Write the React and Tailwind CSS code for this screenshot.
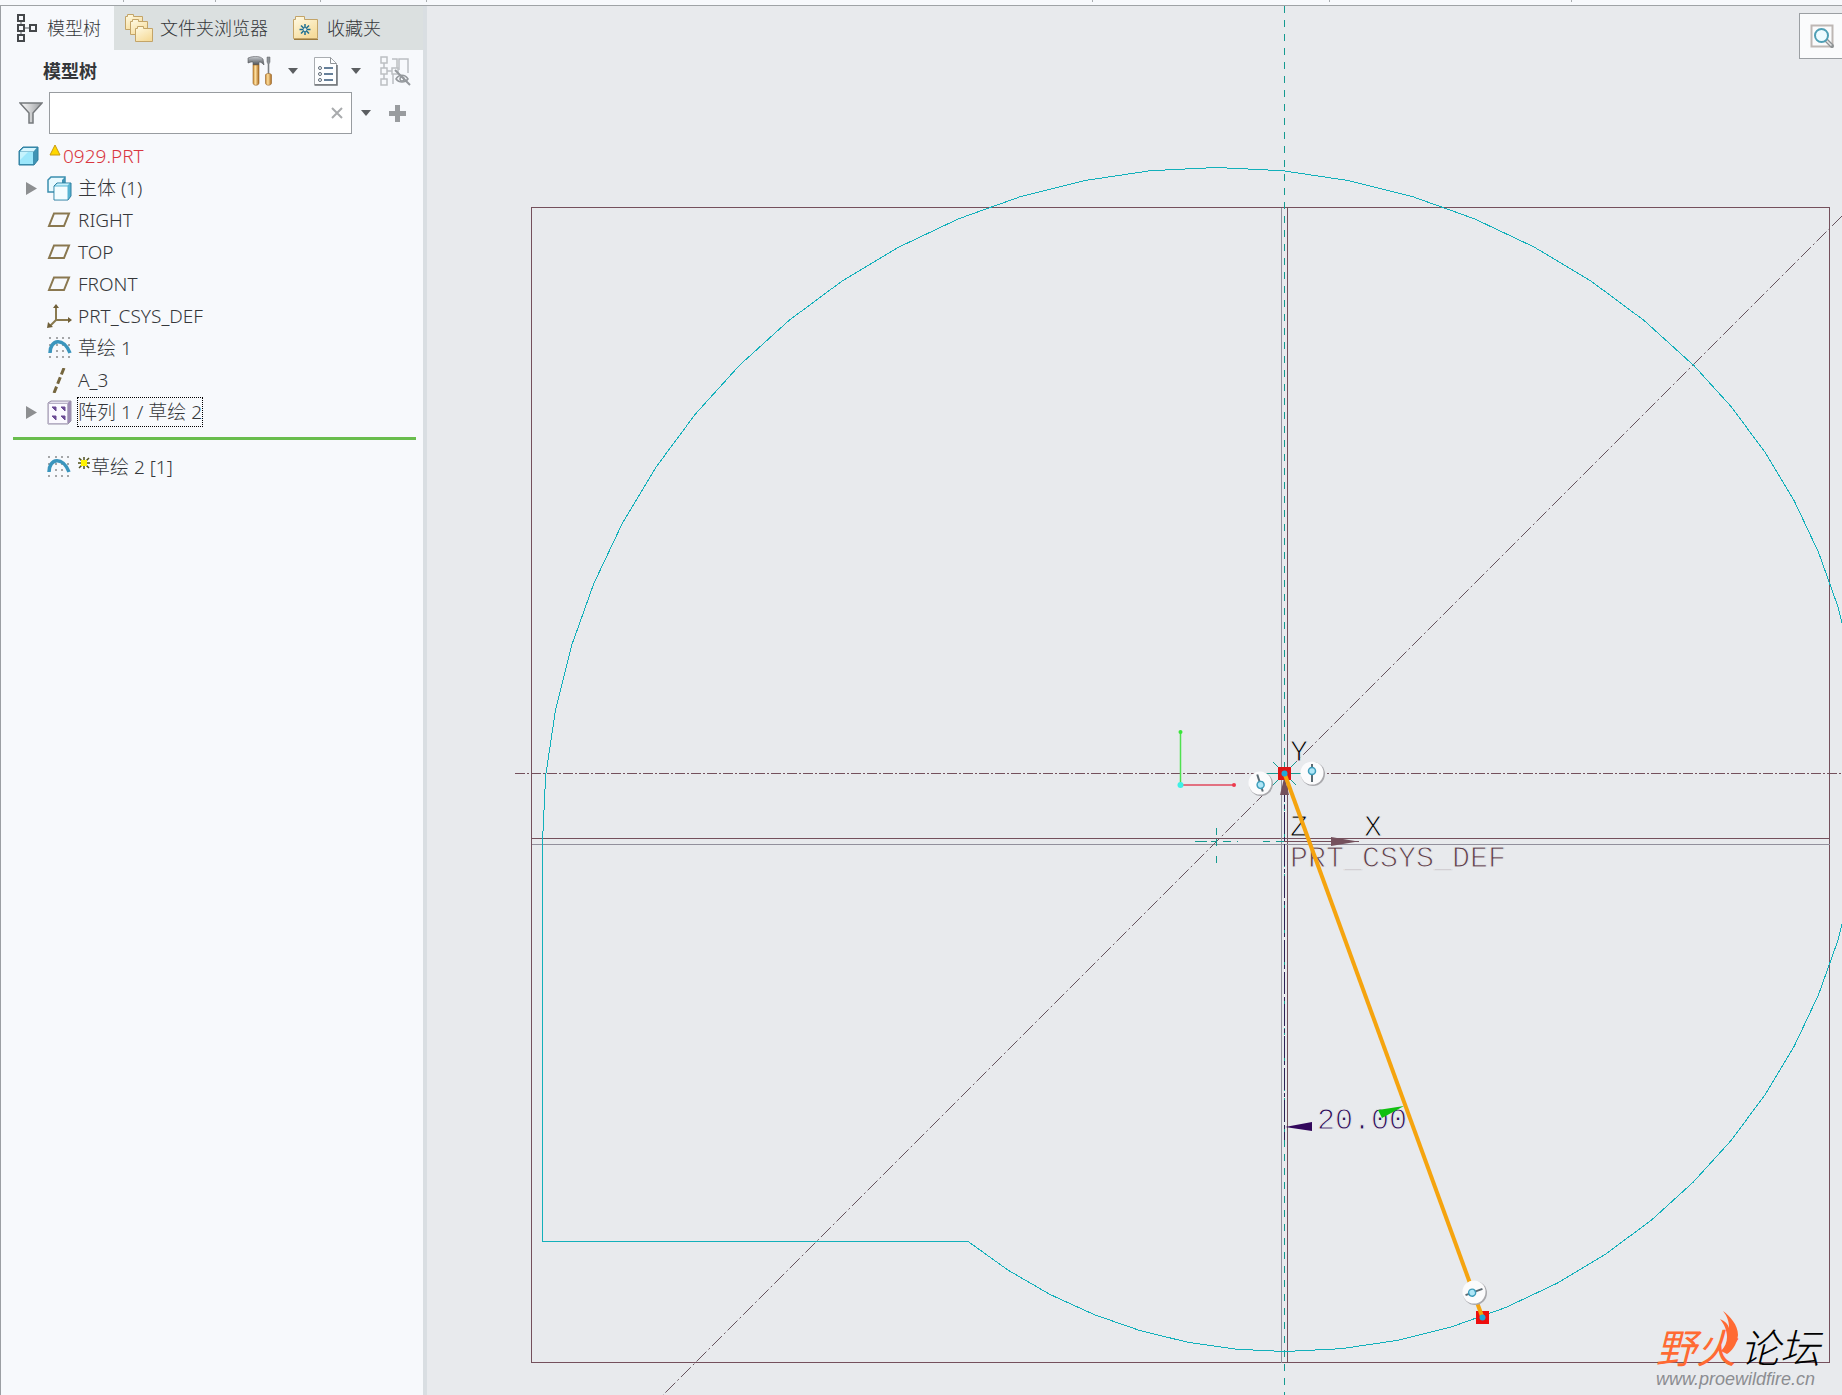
// src/App.jsx
import { useState } from 'react';

/* ---------- toolbar icons ---------- */

const TreeTabIcon = () => (
  <svg width="22" height="30" viewBox="0 0 22 30" fill="none" stroke="#45484b" strokeWidth="2">
    <path d="M4 8v4M4 18v5M8 15h4" stroke="#8b8f92" strokeWidth="1.5" />
    <rect x="1" y="2" width="6" height="6" />
    <rect x="1" y="12" width="6" height="6" />
    <rect x="1" y="22" width="6" height="6" />
    <rect x="13" y="12" width="6" height="6" />
  </svg>
);

const FoldersIcon = () => (
  <svg width="30" height="30" viewBox="0 0 30 30">
    <defs>
      <linearGradient id="folder" x1="0" y1="0" x2="0.6" y2="1">
        <stop offset="0" stopColor="#fffbe6" />
        <stop offset="1" stopColor="#f6dc9c" />
      </linearGradient>
    </defs>
    <g fill="url(#folder)" stroke="#c3a468">
      <path d="M1.5 3.5h2v-2h6v2h9v13h-17z" />
      <path d="M6.5 8.5h2v-2h6v2h9v13h-17z" />
      <path d="M11.5 15.5h2v-2h6v2h9v13h-17z" />
    </g>
  </svg>
);

const FavoriteIcon = () => (
  <svg width="27" height="26" viewBox="0 0 27 26">
    <path d="M1.5 4.5h2v-3h9v3h13v19h-24z" fill="url(#folder)" stroke="#c3a468" />
    <path d="M2 24.5h24" stroke="#9c7a3c" />
    <g stroke="#1d6f93" strokeWidth="1.5">
      <path d="M13 9v11M7.5 14.5h11M9 10.5l8 8M17 10.5l-8 8" />
    </g>
    <circle cx="13" cy="14.5" r="1.5" fill="#f3f3e6" />
  </svg>
);

const ToolsIcon = () => (
  <svg width="26" height="31" viewBox="0 0 26 31">
    <defs>
      <linearGradient id="wood" x1="0" x2="1">
        <stop offset="0" stopColor="#c98a32" />
        <stop offset="0.4" stopColor="#ffe0a0" />
        <stop offset="1" stopColor="#a9681b" />
      </linearGradient>
      <linearGradient id="steel" x1="0" y1="0" x2="0" y2="1">
        <stop offset="0" stopColor="#c9cdd1" />
        <stop offset="1" stopColor="#4d5156" />
      </linearGradient>
    </defs>
    <path d="M1 2l3 -1c4 -1 9 -1 12 2l1 6c-2-2-3-3-5-3v3H6V6H4L1 7z" fill="url(#steel)" stroke="#55585c" strokeWidth="0.6" />
    <path d="M6 9h6v18c0 3-6 3-6 0z" fill="url(#wood)" stroke="#97652a" strokeWidth="0.6" />
    <path d="M20 1h3v5l-1 2v10h-1V8l-1-2z" fill="#8d9297" stroke="#606468" strokeWidth="0.5" />
    <path d="M18.5 19c0-2 6-2 6 0v8c0 3-6 3-6 0z" fill="url(#wood)" stroke="#97652a" strokeWidth="0.6" />
  </svg>
);

const ListDocIcon = () => (
  <svg width="26" height="31" viewBox="0 0 26 31" fill="none">
    <path d="M1.5 1.5h16l6 6v21h-22z" fill="#fdfeff" stroke="#a9adb1" />
    <path d="M17.5 1.5v6h6" stroke="#8f9397" />
    <path d="M1.5 29h22.5V9" stroke="#6e7276" strokeWidth="1.5" />
    <g stroke="#5d6a76">
      <circle cx="7" cy="12" r="1.5" />
      <circle cx="7" cy="18" r="1.5" />
      <circle cx="7" cy="24" r="1.5" />
    </g>
    <path d="M11 12h9M11 18h9M11 24h9" stroke="#66809a" strokeWidth="2" />
  </svg>
);

const TreeHiddenIcon = () => (
  <svg width="31" height="31" viewBox="0 0 31 31" fill="none" stroke="#bcbfc2" strokeWidth="1.5">
    <rect x="1" y="1" width="6" height="6" />
    <rect x="1" y="12" width="6" height="6" />
    <rect x="1" y="23" width="6" height="6" />
    <rect x="12" y="12" width="6" height="6" />
    <path d="M4 7v5M4 18v5M7 15h5M12 3h5v9M19 14V3h9v14M13 18v10" />
    <path d="M16 23c3-5 9-5 12 0c-3 4-9 4-12 0z" stroke="#94989c" />
    <circle cx="22" cy="23" r="2" stroke="#94989c" />
    <path d="M15 14l15 15" stroke="#94989c" strokeWidth="2" />
  </svg>
);

const FilterIcon = () => (
  <svg width="24" height="24" viewBox="0 0 24 24">
    <defs>
      <linearGradient id="funnel" x1="0" x2="1">
        <stop offset="0" stopColor="#ffffff" />
        <stop offset="1" stopColor="#9a9da0" />
      </linearGradient>
    </defs>
    <path d="M1 2h22l-9 10v10h-4V12z" fill="url(#funnel)" stroke="#76797c" strokeWidth="1.5" />
  </svg>
);

const CaretDown = () => (
  <svg width="10" height="6" viewBox="0 0 10 6">
    <path d="M0 0h10l-5 6z" fill="#5b5e61" />
  </svg>
);

const PlusIcon = () => (
  <svg width="17" height="17" viewBox="0 0 17 17">
    <path d="M6 0h5v6h6v5h-6v6H6v-6H0V6h6z" fill="#999c9f" />
  </svg>
);

/* ---------- tree icons ---------- */

const PartIcon = () => (
  <svg width="21" height="20" viewBox="0 0 21 20">
    <path d="M1 5l4-4h15v13l-4 5H1z" fill="#3f93b4" stroke="#2f7f9f" />
    <path d="M2 5.5l3.5-3.5h13l-3 3.5z" fill="#d8f7ff" />
    <rect x="2" y="6" width="13" height="12" fill="#9ce7fb" />
    <path d="M2 6h8l-8 8z" fill="#c6f3fd" />
  </svg>
);

const BodyIcon = () => (
  <svg width="25" height="25" viewBox="0 0 25 25">
    <path d="M1 4l3-3h14v11l-3 4H1z" fill="#e9faff" stroke="#3b8eae" strokeWidth="1.5" />
    <path d="M15 4l3-3v11l-3 4z" fill="#3f93b4" />
    <path d="M7 10l3-3h14v13l-3 4H7z" fill="#58b4d2" stroke="#2f7f9f" />
    <rect x="7.5" y="10.5" width="13" height="13" fill="#f4fdff" />
    <path d="M8 9.5l2.5-2h12l-2 2z" fill="#c6f1fc" />
  </svg>
);

const PlaneIcon = () => (
  <svg width="25" height="16" viewBox="0 0 25 16">
    <path d="M7 1.5h15l-5 12.5H2z" fill="none" stroke="#8a7850" strokeWidth="2" />
  </svg>
);

const CsysIcon = () => (
  <svg width="25" height="25" viewBox="0 0 25 25" fill="none">
    <path d="M9 3v13h12M9 16l-6 6" stroke="#8a7a50" strokeWidth="2" />
    <path d="M9 0l3 4H6zM25 16l-4 3v-6zM0 24l1-6 5 5z" fill="#6f5f38" />
  </svg>
);

const SketchIcon = () => (
  <svg width="24" height="22" viewBox="0 0 24 22">
    <g fill="#a4a6a8">
      {[1, 8, 14, 20].map((x) => (
        <g key={x}>
          <rect x={x} y="0" width="2" height="2" />
          <rect x={x} y="7" width="2" height="2" />
          <rect x={x} y="13" width="2" height="2" />
          <rect x={x} y="19" width="2" height="2" />
        </g>
      ))}
    </g>
    <path d="M2 16C2 2 16 0 22 16" fill="none" stroke="#3a95bd" strokeWidth="3.5" />
  </svg>
);

const AxisIcon = () => (
  <svg width="24" height="25" viewBox="0 0 24 25">
    <path d="M16 0L6 25" stroke="#75663e" strokeWidth="3" strokeDasharray="7 3" />
  </svg>
);

const PatternIcon = () => (
  <svg width="25" height="25" viewBox="0 0 25 25">
    <path d="M1 3l3-2h20v20l-3 3H1z" fill="#9d8bb5" stroke="#9a93a8" />
    <path d="M2 3l2.5-1.5h18l-2 1.5z" fill="#e6e2ee" />
    <rect x="1.5" y="3.5" width="19" height="20" fill="#fbf9ff" stroke="#b7b0c6" />
    <g fill="#6b4a94">
      <path d="M5 7h4v4l-2-2zM14 7h4v4l-2-2zM5 16h4v4l-2-2zM14 16h4v4l-2-2z" stroke="#6b4a94" />
    </g>
  </svg>
);

const WarningIcon = () => (
  <svg width="12" height="12" viewBox="0 0 12 12">
    <path d="M6 1l5 10H1z" fill="#ffd800" stroke="#c99a10" />
  </svg>
);

const NewMarkIcon = () => (
  <svg width="12" height="12" viewBox="0 0 12 12">
    <path d="M6 0v12M0 6h12M1 1l10 10M11 1L1 11" stroke="#4f4f18" strokeWidth="1.5" />
    <rect x="3" y="3" width="6" height="6" fill="#fff200" />
  </svg>
);

const SearchIcon = () => (
  <svg width="25" height="25" viewBox="0 0 25 25" fill="none">
    <rect x="1.5" y="1.5" width="21" height="21" fill="#fafbfc" stroke="#bdb7b4" strokeWidth="2" />
    <path d="M16 16l6 6" stroke="#8e9294" strokeWidth="4" strokeLinecap="round" />
    <path d="M16.5 16.5l5 5" stroke="#e3e5e6" strokeWidth="1.5" />
    <circle cx="11.5" cy="11.5" r="6.5" fill="#eefbff" stroke="#4f9fb5" strokeWidth="2" />
  </svg>
);

const treeItems = [
  { label: '主体 (1)', icon: BodyIcon, expandable: true },
  { label: 'RIGHT', icon: PlaneIcon },
  { label: 'TOP', icon: PlaneIcon },
  { label: 'FRONT', icon: PlaneIcon },
  { label: 'PRT_CSYS_DEF', icon: CsysIcon },
  { label: '草绘 1', icon: SketchIcon },
  { label: 'A_3', icon: AxisIcon },
  { label: '阵列 1 / 草绘 2', icon: PatternIcon, expandable: true, focused: true },
];

const TreeItem = ({ item }) => {
  const Icon = item.icon;
  return (
    <li className="flex h-8 items-center">
      <span className="flex w-[46px] justify-end pr-2.5">
        {item.expandable && (
          <button type="button" aria-label={`展开 ${item.label}`}>
            <svg width="11" height="13" viewBox="0 0 11 13">
              <path d="M0 0l11 6.5L0 13z" fill="#8d8f91" />
            </svg>
          </button>
        )}
      </span>
      <span className="flex w-[25px] justify-center">
        <Icon />
      </span>
      <span
        className={`ml-[5px] border border-dotted py-0.5 leading-6 ${
          item.focused ? 'border-black' : 'border-transparent'
        }`}
      >
        {item.label}
      </span>
    </li>
  );
};

const Sidebar = () => {
  const [query, setQuery] = useState('');

  return (
    <aside className="w-[423px] shrink-0 border-l border-[#9b9fa3] bg-[#f7f9fc] text-[#35373a]">
      {/* Tabs */}
      <nav className="flex h-11 bg-[#dbe0e0]">
        <button type="button" className="flex w-[113px] items-center gap-2 bg-[#f7f9fc] pl-4">
          <TreeTabIcon />
          模型树
        </button>
        <button type="button" className="flex items-center gap-1.5 pl-2.5">
          <FoldersIcon />
          文件夹浏览器
        </button>
        <button type="button" className="flex items-center gap-2 pl-6">
          <FavoriteIcon />
          收藏夹
        </button>
      </nav>

      {/* Title and tools */}
      <div className="flex h-[42px] items-center pl-[42px] pr-3">
        <h1 className="flex-1 font-bold">模型树</h1>
        <button type="button" aria-label="设置" className="flex items-center gap-[15px]">
          <ToolsIcon />
          <CaretDown />
        </button>
        <button type="button" aria-label="显示" className="ml-[15px] flex items-center gap-3">
          <ListDocIcon />
          <CaretDown />
        </button>
        <button type="button" aria-label="隐藏树" className="ml-[19px]">
          <TreeHiddenIcon />
        </button>
      </div>

      {/* Filter */}
      <div className="flex items-center pl-[18px] pr-[17px]">
        <FilterIcon />
        <div className="ml-1.5 flex h-[42px] flex-1 items-center border border-[#989ca0] bg-white pr-2">
          <input
            type="text"
            aria-label="过滤"
            value={query}
            onChange={(e) => setQuery(e.target.value)}
            className="min-w-0 flex-1 px-2 outline-none"
          />
          <button type="button" aria-label="清除" onClick={() => setQuery('')}>
            <svg width="12" height="12" viewBox="0 0 12 12">
              <path d="M1 1l10 10M11 1L1 11" stroke="#a9abad" strokeWidth="2" />
            </svg>
          </button>
        </div>
        <button type="button" aria-label="过滤选项" className="ml-[9px]">
          <CaretDown />
        </button>
        <button type="button" aria-label="添加" className="ml-[18px]">
          <PlusIcon />
        </button>
      </div>

      {/* Model tree */}
      <div className="mt-1.5 text-[19px]">
        <div className="flex h-8 items-center pl-[17px] text-[#d9363f]">
          <PartIcon />
          <span className="mb-3 ml-2.5">
            <WarningIcon />
          </span>
          <span className="ml-0.5">0929.PRT</span>
        </div>
        <ul>
          {treeItems.map((item) => (
            <TreeItem key={item.label} item={item} />
          ))}
        </ul>
        <div className="ml-3 mr-[7px] mt-[9px] h-[3px] bg-[#69bd4d]" />
        <div className="mt-[11px] flex h-8 items-center pl-[46px]">
          <SketchIcon />
          <span className="mb-2 ml-[7px]">
            <NewMarkIcon />
          </span>
          <span className="ml-px">草绘 2 [1]</span>
        </div>
      </div>
    </aside>
  );
};

/* ---------- sketch geometry ---------- */

// splits an arc into equal chords, angles in degrees, counter-clockwise from +X
const arcPoints = (cx, cy, r, from, to, steps) =>
  Array.from({ length: steps + 1 }, (_, i) => {
    const a = ((from + ((to - from) * i) / steps) * Math.PI) / 180;
    return `${(cx + r * Math.cos(a)).toFixed(1)},${(cy - r * Math.sin(a)).toFixed(1)}`;
  });

const profile = [
  '542.5,1241.5',
  ...arcPoints(1216.5, 841.5, 674, 180, 45, 24),
  ...arcPoints(1284.5, 773.5, 578, 45, -90, 24),
  ...arcPoints(1284.5, 841.5, 510, -90, -128.3, 7),
].join(' ');

const ConstraintBadge = ({ x, y, angle }) => (
  <g transform={`translate(${x} ${y})`}>
    <circle cx="1" cy="1" r="12" fill="#a9a9ad" />
    <circle r="11.5" fill="#fbfbfc" />
    <g transform={`rotate(${angle})`}>
      <path d="M0 -9V9" stroke="#5c6a72" strokeWidth="2" />
      <circle cy="-2" r="3.5" fill="#aee6f7" stroke="#3d9dbb" strokeWidth="1.5" />
    </g>
  </g>
);

const Canvas = () => (
  <svg
    viewBox="427 6 1415 1389"
    preserveAspectRatio="xMinYMin slice"
    className="absolute inset-0 h-full w-full"
    fill="none"
  >
    {/* datum planes */}
    <g stroke="#74505c" shapeRendering="crispEdges">
      <path d="M531.5 207.5H1829.5V1362.5H531.5z" />
      <path d="M531.5 838.5H1829.5M1287.5 207.5V1362.5" />
      <path d="M531.5 844.5H1829.5M1281.5 207.5V1362.5" stroke="#92909c" />
    </g>

    {/* centerlines */}
    <g stroke="#74505c">
      <path d="M515 773.5H1842" strokeDasharray="10 2 2 2" shapeRendering="crispEdges" />
      <path d="M1842 216L663 1395" stroke="#66535d" strokeDasharray="14 3 2 3" />
    </g>

    {/* references */}
    <g stroke="#159a90" shapeRendering="crispEdges">
      <path d="M1284.5 6V1395" strokeDasharray="7 7" />
      <path d="M1216.5 828V835M1216.5 839V846M1216.5 856V863" />
      <path d="M1195 841.5H1207M1211 841.5H1217M1223 841.5H1231M1237 841.5H1238M1263 841.5H1270M1276 841.5H1284" />
    </g>

    <polygon points={profile} stroke="#12b0ba" shapeRendering="crispEdges" />

    <path d="M1284.5 780V1140" stroke="#2b2355" strokeDasharray="22 3 4 3" shapeRendering="crispEdges" />

    {/* view triad */}
    <path d="M1180.5 785V732" stroke="#4fe04f" strokeWidth="1.5" />
    <path d="M1180 785H1234" stroke="#e0485c" strokeWidth="1.5" />
    <circle cx="1180.5" cy="732" r="2" fill="#39e639" />
    <circle cx="1234" cy="785" r="2" fill="#ee3a4c" />
    <circle cx="1180.5" cy="785" r="3" fill="#3ef0e6" />

    {/* coordinate system */}
    <path d="M1284 841.5H1359" stroke="#74505c" />
    <path d="M1331 837l24 4v1l-24 4z" fill="#74505c" />
    <path d="M1284.5 776l4.5 19h-9z" fill="#74505c" />
    <g fontFamily="'Liberation Mono', monospace" fontSize="30" stroke="#e8eaed" strokeWidth="1">
      <text x="1290" y="761" fill="#000000">Y</text>
      <text x="1290" y="836" fill="#000000">Z</text>
      <text x="1364" y="836" fill="#000000">X</text>
      <text x="1290" y="867" fill="#5e3e49">PRT_CSYS_DEF</text>
      <text x="1317" y="1129" fill="#2c0a55">20.00</text>
    </g>

    {/* angle dimension */}
    <path d="M1285 1127l27-5v9z" fill="#32085c" />
    <path d="M1404 1106l-26 4 4 8z" fill="#10c010" />

    {/* sketched line and its end points */}
    <path d="M1273 762l23 23M1296 762l-23 23M1266 773.5h37" stroke="#159a90" />
    <rect x="1278" y="767" width="13" height="13" fill="#dc1616" />
    <rect x="1476" y="1311" width="13" height="13" fill="#ee0d0d" />
    <path d="M1284.5 773.5L1482.5 1317.5" stroke="#f5a40f" strokeWidth="4" />
    <circle cx="1284.5" cy="773.5" r="3" fill="#20a8d8" />
    <circle cx="1482.5" cy="1317.5" r="3" fill="#20a8d8" />
    <ConstraintBadge x={1312} y={773} angle={0} />
    <ConstraintBadge x={1260} y={783} angle={162} />
    <ConstraintBadge x={1474} y={1292} angle={-110} />
  </svg>
);

const Watermark = () => (
  <div className="absolute bottom-0 right-[18px] w-[168px] font-['Liberation_Sans','Noto_Sans_CJK_SC',sans-serif]">
    <svg width="20" height="44" viewBox="0 0 20 44" className="absolute -top-6 left-16">
      <path d="M3 0C10 5 18 14 18 24C17 34 11 41 7 43L1 40C5 36 7 31 7 26C7 19 4 13 0 8C5 10 8 13 9 17C9 10 7 5 3 0z" fill="#ff6a33" />
    </svg>
    <p className="flex gap-1 whitespace-nowrap text-[40px] leading-7 font-normal italic">
      <span className="text-[#ff6a33]">野火</span>
      <span className="font-light text-black">论坛</span>
    </p>
    <p className="text-[18px] leading-8 italic text-[#8c8d91]">www.proewildfire.cn</p>
  </div>
);

const App = () => (
  <div className="flex min-h-screen flex-col bg-[#e8eaed] font-['Noto_Sans','Noto_Sans_CJK_SC',sans-serif] text-[18px] leading-6 font-light">
    {/* bottom edge of the ribbon */}
    <header className="flex h-1.5 border-b border-[#9fa3a6] bg-[#f7f9fc] pl-[123px]">
      <span className="h-0.5 w-[93px] border-x border-[#a9adb0]" />
      <span className="h-0.5 w-[105px] border-r border-[#a9adb0]" />
      <span className="h-0.5 w-[106px] border-r border-[#a9adb0]" />
      <span className="h-0.5 w-[666px] border-r border-[#a9adb0]" />
      <span className="h-0.5 w-[237px] border-r border-[#a9adb0]" />
      <span className="h-0.5 w-[242px] border-r border-[#a9adb0]" />
    </header>
    <div className="flex flex-1">
      <Sidebar />
      <div className="w-1 shrink-0 bg-[#d9dee2]" />
      <main className="relative flex-1 overflow-hidden">
        <Canvas />
        <button
          type="button"
          aria-label="重新调整"
          className="absolute right-0 top-[7px] flex h-[46px] w-[43px] items-center border border-r-0 border-[#9b9fa3] bg-[#fafbfc] pl-2.5"
        >
          <SearchIcon />
        </button>
        <Watermark />
      </main>
    </div>
  </div>
);

export default App;
